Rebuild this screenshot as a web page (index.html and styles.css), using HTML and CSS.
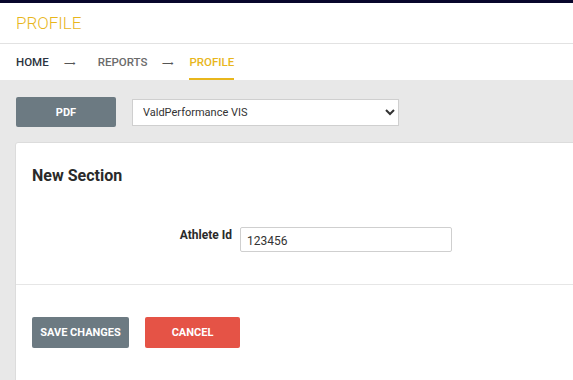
FILE: index.html
```html
<!DOCTYPE html>
<html>
<head>
    <meta name="viewport" content="width=device-width, initial-scale=1">
    <link rel="stylesheet" href="styles.css">
</head>

<body>

<div class="topbar"></div>

<div class="page-header">
    <h1>Profile</h1>
</div>

<div class="crumbs">
    <a href="#" class="crumb home">Home</a>
    <span class="arrow">&#10230;</span>
    <a href="#" class="crumb reports">Reports</a>
    <span class="arrow">&#10230;</span>
    <a href="#" class="crumb active">Profile</a>
</div>

<div class="content">

    <div class="toolbar">
        <button type="button" class="btn btn-grey pdfbtn">PDF</button>
        <select class="report-select">
            <option>ValdPerformance VIS</option>
        </select>
    </div>

    <div class="card">
        <div class="card-top">
            <h3>New Section</h3>

            <div class="field">
                <label for="athlete"><b>Athlete Id</b></label>
                <input type="text" id="athlete" value="123456">
            </div>
        </div>

        <div class="card-foot">
            <button type="button" class="btn btn-grey savebtn">Save Changes</button>
            <button type="button" class="btn btn-red">Cancel</button>
        </div>
    </div>

</div>

</body>
</html>
```

FILE: styles.css
```css
body {
    margin: 0;
    font-family: Roboto, "Liberation Sans", Arial, sans-serif;
    background-color: #fff;
    overflow: hidden;
}

.topbar {
    height: 3px;
    background-color: #07062b;
}

.page-header {
    height: 40px;
    border-bottom: 1px solid #e2e2e2;
    padding: 0 16px;
    display: flex;
    align-items: center;
}

.page-header h1 {
    margin: 0;
    font-size: 17px;
    font-weight: 300;
    color: #e8b61c;
    text-transform: uppercase;
}

.crumbs {
    height: 36px;
    padding: 0 16px;
    display: flex;
    align-items: stretch;
}

.crumb {
    display: flex;
    align-items: center;
    padding-top: 2px;
    font-size: 11.5px;
    font-weight: 500;
    text-transform: uppercase;
    color: #6b6b6b;
    text-decoration: none;
    border-bottom: 2px solid transparent;
}

.crumb.home {
    color: #2b3340;
}

.crumb.reports {
    margin-left: 7px;
}

.crumb.active {
    color: #e8b61c;
    border-bottom-color: #e8b61c;
}

.arrow {
    display: flex;
    align-items: center;
    padding-top: 2px;
    margin: 0 16px 0 15px;
    font-size: 8px;
    color: #555;
}

.content {
    background-color: #e8e8e8;
    padding: 17px 0 0 15px;
    height: 283px;
    overflow: hidden;
}

.toolbar {
    display: flex;
    align-items: center;
    gap: 16px;
    padding-left: 1px;
}

.btn {
    border: none;
    border-radius: 2px;
    color: #fff;
    font-family: Roboto, "Liberation Sans", sans-serif;
    font-size: 11px;
    font-weight: 700;
    text-transform: uppercase;
    height: 31px;
    padding: 0;
    cursor: pointer;
}

.btn-grey {
    background-color: #6c7a82;
}

.btn-red {
    background-color: #e55346;
    width: 95px;
}

.pdfbtn {
    width: 100px;
    height: 30px;
}

.savebtn {
    width: 97px;
}

.report-select {
    width: 267px;
    height: 27px;
    border: 1px solid #cfcfcf;
    border-radius: 0;
    background-color: #fff;
    font-family: Roboto, "Liberation Sans", sans-serif;
    font-size: 11px;
    color: #333;
    padding-left: 6px;
}

.card {
    margin-top: 15px;
    margin-right: -20px;
    background-color: #fff;
    border: 1px solid #dcdcdc;
    border-radius: 3px;
    height: 260px;
}

.card-top {
    padding: 23px 16px 32px 16px;
    border-bottom: 1px solid #e6e6e6;
}

.card-top h3 {
    margin: 0 0 41px 0;
    font-size: 16px;
    line-height: 20px;
    font-weight: 700;
    color: #2a2a2a;
}

.field {
    display: flex;
    align-items: flex-start;
}

.field label {
    width: 200px;
    padding-right: 8px;
    text-align: right;
    font-size: 12px;
    color: #2a2a2a;
    padding-top: 1px;
}

.field input {
    width: 212px;
    height: 25px;
    box-sizing: border-box;
    border: 1px solid #cfcfcf;
    border-radius: 2px;
    padding: 2px 6px 0 6px;
    font-family: Roboto, "Liberation Sans", sans-serif;
    font-size: 12px;
    color: #333;
}

.card-foot {
    padding: 32px 16px;
    display: flex;
    gap: 16px;
}
```
